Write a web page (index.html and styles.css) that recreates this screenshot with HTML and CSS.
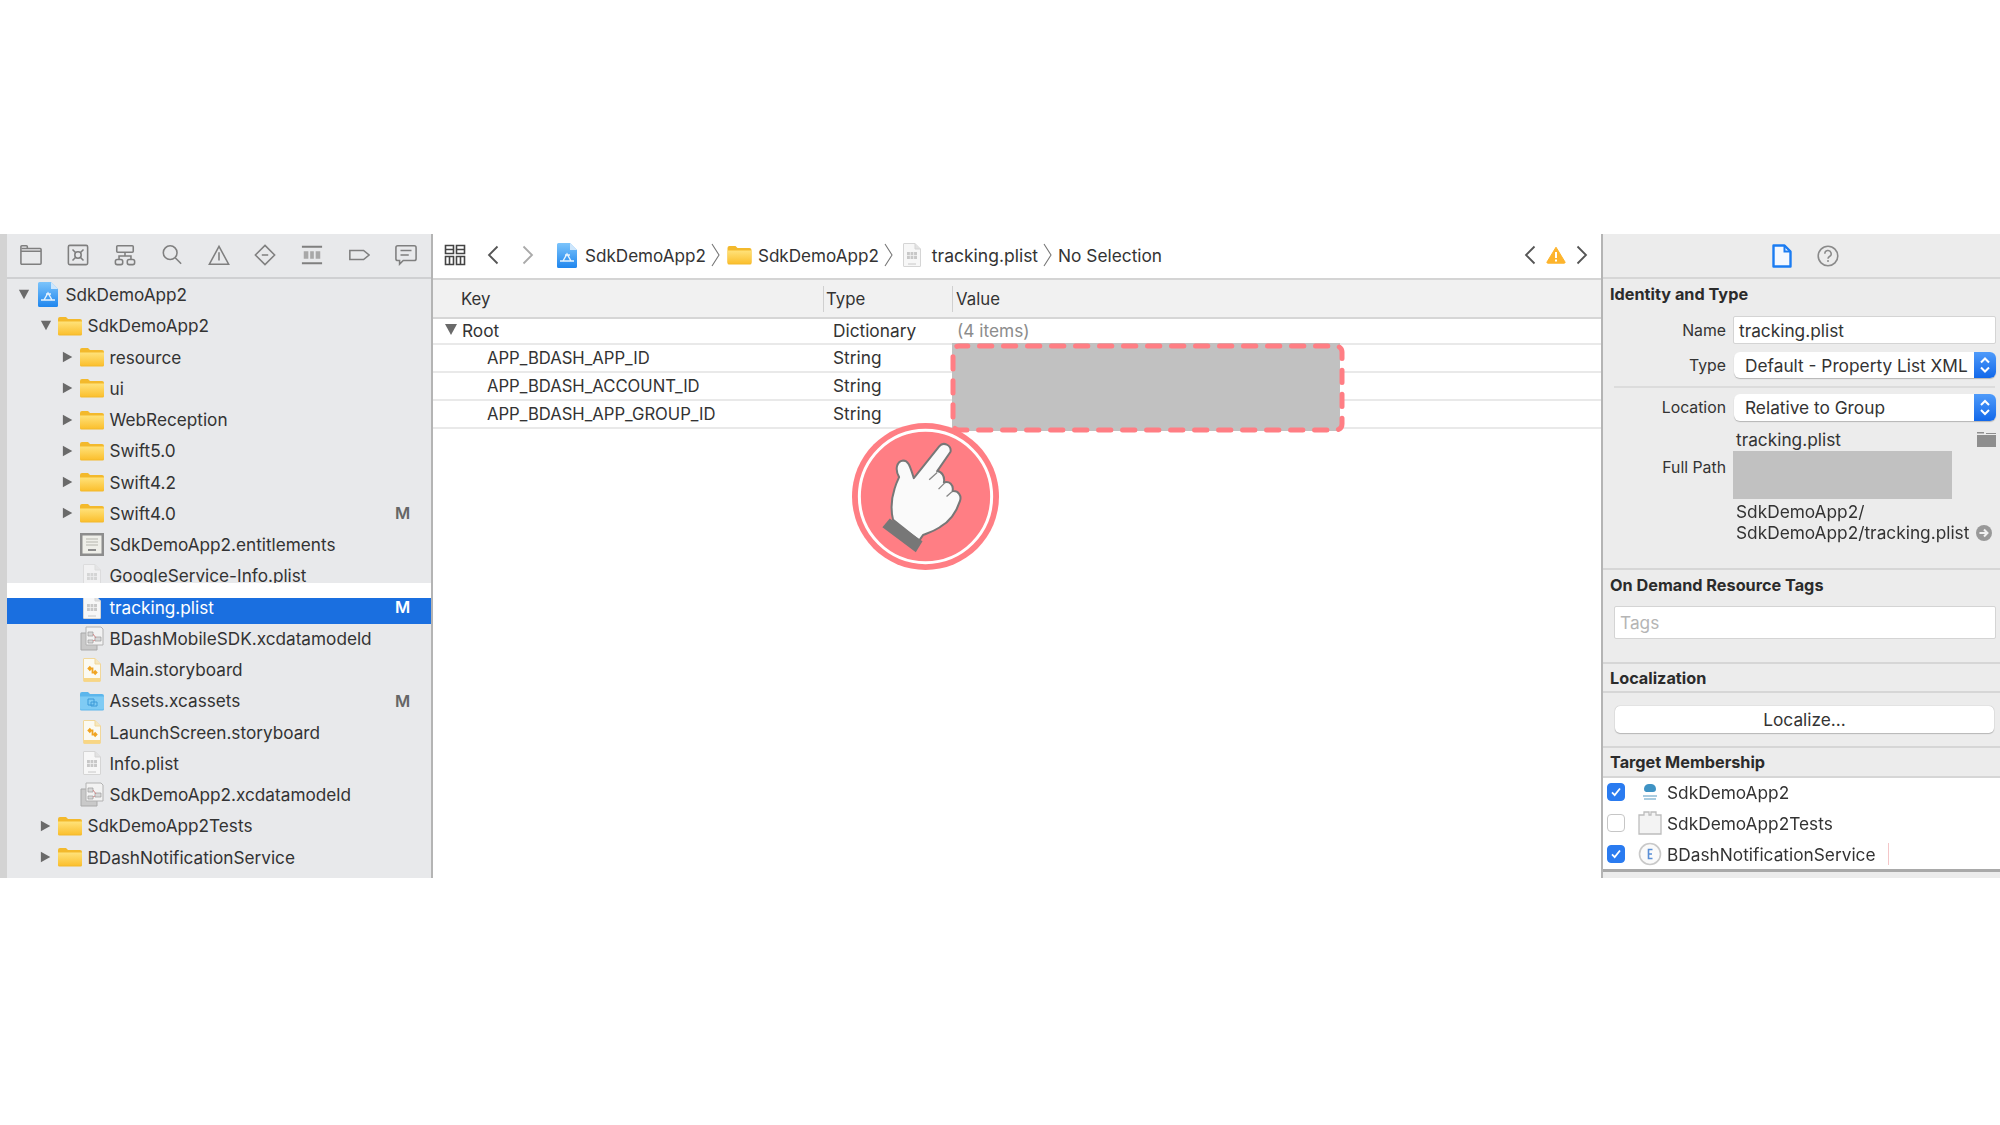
FILE: index.html
```html
<!DOCTYPE html>
<html lang="en">
<head>
<meta charset="utf-8">
<title>tracking.plist</title>
<link rel="stylesheet" href="styles.css">
</head>
<body>
<svg class="defs" width="0" height="0" aria-hidden="true">
  <defs>
    <linearGradient id="fg" x1="0" y1="0" x2="0" y2="1"><stop offset="0" stop-color="#ffe27a"/><stop offset="1" stop-color="#fbc02f"/></linearGradient>
    <linearGradient id="ag" x1="0" y1="0" x2="0" y2="1"><stop offset="0" stop-color="#7cc4fb"/><stop offset="1" stop-color="#1f86ee"/></linearGradient>
    <symbol id="folder" viewBox="0 0 24 20"><path d="M0 3a2 2 0 0 1 2-2h6l2 2h12a2 2 0 0 1 2 2v13a1.500 1.500 0 0 1-1.500 1.500h-21A1.500 1.500 0 0 1 0 18z" fill="#f3b92c"/><path d="M0 5.500h24V17a1.500 1.500 0 0 1-1.500 1.500h-21A1.500 1.500 0 0 1 0 17z" fill="url(#fg)"/></symbol>
    <symbol id="appicon" viewBox="0 0 20 25"><path d="M1.500 0H13l7 7v16.500a1.500 1.500 0 0 1-1.500 1.500h-17A1.500 1.500 0 0 1 0 23.500v-22A1.500 1.500 0 0 1 1.500 0z" fill="url(#ag)"/><path d="M13 0l7 7h-7z" fill="#cde6fc"/><path d="M3 18h14M6 18l4-7 4 7M8 12h5" fill="none" stroke="#e6f3fe" stroke-width="1.400"/></symbol>
    <symbol id="plist" viewBox="0 0 18 24"><path d="M1 .5h11l5.500 5.500v17a.5.5 0 0 1-.5.5H1a.5.5 0 0 1-.5-.5v-22A.5.5 0 0 1 1 .5z" fill="#f7f7f7" stroke="#d5d5d5"/><path d="M12 .5V6h5.500" fill="#e2e2e2" stroke="#d5d5d5"/><path d="M4 9h10v7H4z" fill="#c8c8c8"/><path d="M7.300 9v7M10.600 9v7M4 12.500h10" stroke="#f2f2f2" stroke-width=".8"/><path d="M5 21h8" stroke="#c8c8c8"/></symbol>
    <symbol id="cert" viewBox="0 0 24 25"><path d="M0 1h24v23H0z" fill="#8d8d8d"/><path d="M2.500 3.500h19v18h-19z" fill="#efefe9"/><path d="M6 7h12M6 10h12M6 13h12" stroke="#b5b5ad"/><path d="M8 18h8" stroke="#8d8d8d" stroke-width="2"/></symbol>
    <symbol id="model" viewBox="0 0 24 25"><path d="M1 7h16v17H1z" fill="#c9c9c9" stroke="#a9a9a9"/><path d="M6 1h15l2 2v16H6z" fill="#f2f2f2" stroke="#b2b2b2"/><path d="M8 6h5v4H8zM15 11h6v4h-6zM8 14h5v3H8z" fill="#d7d7d7" stroke="#9b9b9b" stroke-width=".7"/><path d="M13 8l3 4M13 15l2-1" stroke="#d28a8a"/></symbol>
    <symbol id="story" viewBox="0 0 18 24"><path d="M1 .5h11l5.500 5.500v17a.5.5 0 0 1-.5.5H1a.5.5 0 0 1-.5-.5v-22A.5.5 0 0 1 1 .5z" fill="#fbfaf2" stroke="#f1d79a"/><path d="M12 .5V6h5.500" fill="#f5e7bf" stroke="#f1d79a"/><path d="M1 20h16v3.500H1z" fill="#f8d684"/><path d="M5.500 10.500h4v4h4M11.500 12.500l2 2-2 2M7.500 8.500l-2 2 2 2" fill="none" stroke="#f0a422" stroke-width="1.800"/></symbol>
    <symbol id="assets" viewBox="0 0 24 20"><path d="M0 3a2 2 0 0 1 2-2h6l2 2h12a2 2 0 0 1 2 2v13a1.500 1.500 0 0 1-1.500 1.500h-21A1.500 1.500 0 0 1 0 18z" fill="#5cb6ec"/><path d="M0 5.500h24V17a1.500 1.500 0 0 1-1.500 1.500h-21A1.500 1.500 0 0 1 0 17z" fill="#7fcbf4"/><path d="M8 8h6v6H8zM11 11h6v4h-6z" fill="none" stroke="#3d9ad8"/></symbol>
    <symbol id="updown" viewBox="0 0 22 26"><path d="M7 10.500l4-4 4 4M7 15.500l4 4 4-4" fill="none" stroke="#fff" stroke-width="2"/></symbol>
    <symbol id="tick" viewBox="0 0 18 18"><path d="M4.500 9.500l3 3 6-7.500" fill="none" stroke="#fff" stroke-width="2"/></symbol>
    <symbol id="tri-r" viewBox="0 0 12 14"><path d="M0 1l11 6-11 6z" fill="#6a6a6a"/></symbol>
    <symbol id="tri-d" viewBox="0 0 14 12"><path d="M1 0h12L7 11z" fill="#6a6a6a"/></symbol>
  </defs>
</svg>

<main class="window">
  <aside class="nav">
    <div class="tools">
      <svg class="tool" viewBox="0 0 24 24"><path d="M2 5h20a1 1 0 0 1 1 1v15a1 1 0 0 1-1 1H2a1 1 0 0 1-1-1V3a1 1 0 0 1 1-1h5a1 1 0 0 1 1 1v2M1 8h22"/></svg>
      <svg class="tool" viewBox="0 0 24 24"><rect x="1.500" y="1.500" width="21" height="21" rx="1.500"/><circle cx="12" cy="12" r="3.500"/><path d="M6 6l3.500 3.500M18 6l-3.500 3.500M6 18l3.500-3.500M18 18l-3.500-3.500"/></svg>
      <svg class="tool" viewBox="0 0 24 24"><rect x="3" y="2" width="18" height="7" rx="1"/><rect x="1.500" y="17" width="8" height="5.500" rx="2"/><rect x="14.500" y="17" width="8" height="5.500" rx="2"/><path d="M5.500 17v-4h13v4M12 9v4"/></svg>
      <svg class="tool" viewBox="0 0 24 24"><circle cx="10" cy="9.500" r="7.500"/><path d="M15.500 15l6.500 6.500"/></svg>
      <svg class="tool" viewBox="0 0 24 24"><path d="M12 2.500l10.500 19.500h-21zM12 9v9"/></svg>
      <svg class="tool" viewBox="0 0 24 24"><path d="M12 1.500l10.500 10.500-10.500 10.500-10.500-10.500zM8.500 12h7"/></svg>
      <svg class="tool" viewBox="0 0 24 24"><path d="M1 3h22M1 21h22" stroke-width="2"/><path d="M3 8h5v8H3zM10 8h4v8h-4zM16 8h5v8h-5z" fill="#a8a8a8" stroke="none"/></svg>
      <svg class="tool" viewBox="0 0 24 24"><path d="M2 7h15l6 5-6 5H2z"/></svg>
      <svg class="tool" viewBox="0 0 24 24"><path d="M3 2h18a2 2 0 0 1 2 2v12a2 2 0 0 1-2 2H9l-4 4v-4H3a2 2 0 0 1-2-2V4a2 2 0 0 1 2-2zM6 7h12M6 12h9"/></svg>
    </div>
    <ul class="tree">
      <li class="row l0"><svg class="tri"><use href="#tri-d"/></svg><span class="ico"><svg class="i-app"><use href="#appicon"/></svg></span><span>SdkDemoApp2</span></li>
      <li class="row l1"><svg class="tri"><use href="#tri-d"/></svg><span class="ico"><svg class="i-folder"><use href="#folder"/></svg></span><span>SdkDemoApp2</span></li>
      <li class="row l2"><svg class="tri"><use href="#tri-r"/></svg><span class="ico"><svg class="i-folder"><use href="#folder"/></svg></span><span>resource</span></li>
      <li class="row l2"><svg class="tri"><use href="#tri-r"/></svg><span class="ico"><svg class="i-folder"><use href="#folder"/></svg></span><span>ui</span></li>
      <li class="row l2"><svg class="tri"><use href="#tri-r"/></svg><span class="ico"><svg class="i-folder"><use href="#folder"/></svg></span><span>WebReception</span></li>
      <li class="row l2"><svg class="tri"><use href="#tri-r"/></svg><span class="ico"><svg class="i-folder"><use href="#folder"/></svg></span><span>Swift5.0</span></li>
      <li class="row l2"><svg class="tri"><use href="#tri-r"/></svg><span class="ico"><svg class="i-folder"><use href="#folder"/></svg></span><span>Swift4.2</span></li>
      <li class="row l2"><svg class="tri"><use href="#tri-r"/></svg><span class="ico"><svg class="i-folder"><use href="#folder"/></svg></span><span>Swift4.0</span><b class="mod">M</b></li>
      <li class="row l2"><span class="tri"></span><span class="ico"><svg class="i-model"><use href="#cert"/></svg></span><span>SdkDemoApp2.entitlements</span></li>
      <li class="row l2 faded"><span class="tri"></span><span class="ico"><svg class="i-file"><use href="#plist"/></svg></span><span>GoogleService-Info.plist</span></li>
      <li class="row l2 sel"><span class="tri"></span><span class="ico"><svg class="i-file"><use href="#plist"/></svg></span><span>tracking.plist</span><b class="mod">M</b></li>
      <li class="row l2"><span class="tri"></span><span class="ico"><svg class="i-model"><use href="#model"/></svg></span><span>BDashMobileSDK.xcdatamodeld</span></li>
      <li class="row l2"><span class="tri"></span><span class="ico"><svg class="i-file"><use href="#story"/></svg></span><span>Main.storyboard</span></li>
      <li class="row l2"><span class="tri"></span><span class="ico"><svg class="i-folder"><use href="#assets"/></svg></span><span>Assets.xcassets</span><b class="mod">M</b></li>
      <li class="row l2"><span class="tri"></span><span class="ico"><svg class="i-file"><use href="#story"/></svg></span><span>LaunchScreen.storyboard</span></li>
      <li class="row l2"><span class="tri"></span><span class="ico"><svg class="i-file"><use href="#plist"/></svg></span><span>Info.plist</span></li>
      <li class="row l2"><span class="tri"></span><span class="ico"><svg class="i-model"><use href="#model"/></svg></span><span>SdkDemoApp2.xcdatamodeld</span></li>
      <li class="row l1"><svg class="tri"><use href="#tri-r"/></svg><span class="ico"><svg class="i-folder"><use href="#folder"/></svg></span><span>SdkDemoApp2Tests</span></li>
      <li class="row l1"><svg class="tri"><use href="#tri-r"/></svg><span class="ico"><svg class="i-folder"><use href="#folder"/></svg></span><span>BDashNotificationService</span></li>
    </ul>
  </aside>

  <section class="center">
    <div class="jump">
      <svg class="grid-ico" viewBox="0 0 22 22"><path d="M1.500 1.500h8v8h-8zM12.500 1.500h8v8h-8zM1.500 12.500h8v8h-8zM12.500 12.500h8v8h-8zM1.500 5.500h8M12.500 5.500h8M5.500 12.500v8M16.500 12.500v8"/></svg>
      <svg class="chev back" viewBox="0 0 12 20"><path d="M10.500 1.500L2 10l8.500 8.500"/></svg>
      <svg class="chev fwd" viewBox="0 0 12 20"><path d="M1.500 1.500L10 10l-8.500 8.500"/></svg>
      <svg class="crumb-app"><use href="#appicon"/></svg>
      <span class="crumb c1">SdkDemoApp2</span>
      <svg class="sep" viewBox="0 0 9 24"><path d="M1 1l7 11-7 11"/></svg>
      <svg class="crumb-folder"><use href="#folder"/></svg>
      <span class="crumb c2">SdkDemoApp2</span>
      <svg class="sep" viewBox="0 0 9 24"><path d="M1 1l7 11-7 11"/></svg>
      <svg class="crumb-file"><use href="#plist"/></svg>
      <span class="crumb c3">tracking.plist</span>
      <svg class="sep" viewBox="0 0 9 24"><path d="M1 1l7 11-7 11"/></svg>
      <span class="crumb c4">No Selection</span>
      <span class="spring"></span>
      <svg class="chev issue-prev" viewBox="0 0 12 20"><path d="M10.500 1.500L2 10l8.500 8.500"/></svg>
      <svg class="warn" viewBox="0 0 20 18"><path d="M10 1.200L19 16a.8.8 0 0 1-.7 1.200H1.700A.8.8 0 0 1 1 16z" fill="#fdb42c" stroke="#fdb42c" stroke-linejoin="round"/><path d="M10 6v6M10 13.500v2" stroke="#fff" stroke-width="2"/></svg>
      <svg class="chev issue-next" viewBox="0 0 12 20"><path d="M1.500 1.500L10 10l-8.500 8.500"/></svg>
    </div>

    <div class="thead">
      <span class="th k">Key</span><span class="th t">Type</span><span class="th v">Value</span>
    </div>
    <div class="tr root"><span class="k"><svg class="root-tri"><use href="#tri-d"/></svg>Root</span><span class="t">Dictionary</span><span class="v muted">(4 items)</span></div>
    <div class="tr"><span class="k child">APP_BDASH_APP_ID</span><span class="t">String</span><span class="v"></span></div>
    <div class="tr"><span class="k child">APP_BDASH_ACCOUNT_ID</span><span class="t">String</span><span class="v"></span></div>
    <div class="tr"><span class="k child">APP_BDASH_APP_GROUP_ID</span><span class="t">String</span><span class="v"></span></div>

    <svg class="redact" viewBox="0 0 397 92"><rect x="2" y="0" width="388" height="88" fill="#c1c1c1"/><rect x="3" y="3" width="389" height="84" rx="6" fill="none" stroke="#ff7e84" stroke-width="5" stroke-dasharray="12.300 11.700" stroke-linecap="round" stroke-dashoffset="-20.500"/></svg>

    <svg class="hand" viewBox="37 280 440 440">
      <circle cx="257" cy="500" r="220" fill="#ff7e84"/>
      <circle cx="257" cy="500" r="198" fill="none" stroke="#fff" stroke-width="9"/>
      <path d="M160 570C150 530 155 490 178 442C165 420 170 395 190 392C208 392 212 415 222 445L298 350C310 335 335 345 332 366L292 424C305 425 316 440 312 458C328 452 342 465 338 484C355 482 366 498 360 514C350 545 330 575 300 592C280 605 262 610 250 615L238 632z" fill="#fafafa" stroke="#777" stroke-width="6" stroke-linejoin="round"/>
      <path d="M128 592L150 566 248 634 228 667z" fill="#777"/>
      <path d="M268 450L292 428M296 478L314 460M320 500L336 486" stroke="#888" stroke-width="4" fill="none"/>
    </svg>
  </section>

  <aside class="insp">
    <div class="insp-tools">
      <svg class="doc" viewBox="0 0 20 24"><path d="M1.500 1.500h11l6 6v15h-17z" fill="#f4f8ff" stroke="#1b7cf2" stroke-width="2.400" stroke-linejoin="round"/><path d="M12.500 1.500v6h6" fill="none" stroke="#1b7cf2" stroke-width="2"/></svg>
      <svg class="help" viewBox="0 0 22 22"><circle cx="11" cy="11" r="9.800" fill="none" stroke="#8a8a8a" stroke-width="1.600"/><path d="M7.800 8.700a3.200 3.200 0 1 1 4.700 2.800c-1 .6-1.500 1-1.500 2.200M11 15v2" fill="none" stroke="#8a8a8a" stroke-width="1.500"/></svg>
    </div>

    <section class="sec sec-id">
      <h2 class="sec-title">Identity and Type</h2>
      <div class="form">
        <label class="lab">Name</label><div class="field f-name">tracking.plist</div>
        <label class="lab">Type</label><div class="pop p-type"><span>Default - Property List XML</span><i class="step"><svg><use href="#updown"/></svg></i></div>
        <hr class="rule">
        <label class="lab">Location</label><div class="pop p-loc"><span>Relative to Group</span><i class="step"><svg><use href="#updown"/></svg></i></div>
        <span></span><div class="fname"><span>tracking.plist</span><svg class="small-folder" viewBox="0 0 19 15"><path d="M0 0h7v1.500H0zM0 3h19v12H0zM9 1h10v1H9z" fill="#8e8e8e"/></svg></div>
        <label class="lab lab-path">Full Path</label><div class="path-wrap"><div class="path-mask"></div><div class="path-text">SdkDemoApp2/<br>SdkDemoApp2/tracking.plist<svg class="goto" viewBox="0 0 14 14"><circle cx="7" cy="7" r="7" fill="#999"/><path d="M3 7h7M7 4l3 3-3 3" fill="none" stroke="#f2f2f2" stroke-width="1.800"/></svg></div></div>
      </div>
    </section>

    <section class="sec sec-tags">
      <h2 class="sec-title">On Demand Resource Tags</h2>
      <div class="field f-tags">Tags</div>
    </section>

    <section class="sec sec-loc">
      <h2 class="sec-title ruled">Localization</h2>
      <div class="btn">Localize...</div>
    </section>

    <section class="target">
      <h2 class="sec-title ruled t-title">Target Membership</h2>
      <div class="tlist">
        <div class="trow"><i class="cb on"><svg><use href="#tick"/></svg></i><svg class="tico" viewBox="0 0 24 24"><path d="M6 9a5 5 0 0 1 6-5 5 5 0 0 1 6 5 3 3 0 0 1-3 3H8a3 3 0 0 1-2-3z" fill="#3f93c4"/><path d="M5 16h14M6 19h12" stroke="#8fbcd6" stroke-width="1.500"/></svg><span>SdkDemoApp2</span></div>
        <div class="trow"><i class="cb"></i><svg class="tico" viewBox="0 0 24 24"><path d="M1 23V4h5V1h5v3h2V1h5v3h5v19z" fill="#f3f3f3" stroke="#bdbdbd" stroke-width="1.300"/></svg><span>SdkDemoApp2Tests</span></div>
        <div class="trow last"><i class="cb on"><svg><use href="#tick"/></svg></i><svg class="tico" viewBox="0 0 24 24"><circle cx="12" cy="12" r="10.500" fill="#fafafa" stroke="#c9c9c9" stroke-width="1.600"/><path d="M14.500 7.500H10.500V16.500H14.500M10.500 12H14" fill="none" stroke="#5a8fd6" stroke-width="1.600"/></svg><span>BDashNotificationService</span></div>
      </div>
      <div class="tbar"></div>
    </section>
  </aside>
</main>
</body>
</html>
```

FILE: styles.css
```css
* { box-sizing: border-box; }
html, body { margin: 0; padding: 0; background: #fff; }
body {
  width: 2000px;
  height: 1125px;
  overflow: hidden;
  padding-top: 234px;
  font-family: Inter, "Liberation Sans", sans-serif;
  font-size: 17.2px;
  color: #333;
}
.defs { position: absolute; }
.window {
  display: flex;
  height: 644px;
  filter: blur(0.55px);
}

/* navigator */
.nav {
  width: 433px;
  flex: none;
  background: #e8e9eb;
  border-left: 7px solid #d3d3d3;
  border-right: 2px solid #b4b4b4;
  overflow: hidden;
  position: relative;
}
.tools {
  height: 45px;
  display: flex;
  align-items: center;
  justify-content: space-between;
  padding: 0 14px 1px 13px;
  border-bottom: 2px solid #cfd0d2;
}
.tool {
  width: 22px;
  height: 22px;
  fill: none;
  stroke: #7f7f7f;
  stroke-width: 1.700;
}
.tree { list-style: none; margin: 0; padding: 0; }
.row {
  display: flex;
  align-items: center;
  height: 31.25px;
  position: relative;
  white-space: nowrap;
}
.row > span, .row > b, .row > svg { position: relative; z-index: 1; }
.l0 { padding-left: 11px; }
.l1 { padding-left: 33px; }
.l2 { padding-left: 55px; }
.tri { width: 12px; height: 12px; flex: none; margin-right: 6px; display: block; }
.ico { width: 24px; flex: none; margin-right: 5.500px; display: flex; justify-content: center; align-items: center; }
.i-app { width: 20px; height: 25px; }
.i-folder { width: 24px; height: 20px; }
.i-file { width: 18px; height: 24px; }
.i-model { width: 24px; height: 25px; }
.mod {
  position: absolute !important;
  left: 388px;
  font-size: 16.500px;
  font-weight: 600;
  color: #666;
}
.sel { color: #fff; }
.sel .mod { color: #fff; }
.sel::before {
  content: "";
  position: absolute;
  left: 0;
  right: 0;
  top: 6.5px;
  height: 26px;
  background: #1a6fe0;
}
.sel::after {
  content: "";
  position: absolute;
  left: 0;
  right: 0;
  top: -9px;
  height: 15.5px;
  background: #fff;
  z-index: 2;
}
.faded .ico { opacity: .6; }

/* centre */
.center {
  width: 1170px;
  flex: none;
  background: #fff;
  border-right: 2px solid #b4b4b4;
  position: relative;
  font-size: 17.300px;
}
.jump {
  height: 46px;
  display: flex;
  align-items: center;
  padding: 0 13px 2px 11px;
  border-bottom: 2px solid #d4d4d4;
  background: #fff;
  font-size: 17.100px;
}
.grid-ico { width: 22px; height: 22px; fill: none; stroke: #444; stroke-width: 1.600; flex: none; }
.chev { width: 12px; height: 20px; fill: none; stroke: #555; stroke-width: 1.800; flex: none; }
.back { margin-left: 21px; }
.fwd { margin-left: 23px; stroke: #aaa; }
.crumb-app { width: 20px; height: 25px; margin-left: 23px; flex: none; }
.crumb-folder { width: 25px; height: 20px; flex: none; margin: 0 6px 0 7px; }
.crumb-file { width: 18px; height: 24px; flex: none; margin: 0 11px 0 10px; }
.crumb { white-space: nowrap; }
.c1 { margin-left: 8px; }
.c3 { font-size: 17.500px; }
.sep { width: 9px; height: 24px; flex: none; margin-left: 5px; fill: none; stroke: #777; stroke-width: 1.100; }
.c4 { margin-left: 6px; font-size: 17.300px; }
.spring { flex: 1; }
.warn { width: 20px; height: 18px; margin: 0 10px; flex: none; }

.thead, .tr {
  display: grid;
  grid-template-columns: 390px 129px 1fr;
  align-items: center;
}
.thead {
  height: 39px;
  padding: 0;
  background: #f1f1f1;
  border-bottom: 2px solid #d6d6d6;
  position: relative;
  font-size: 16.800px;
}
.th { height: 26px; display: flex; align-items: center; }
.th.k { padding-left: 28px; }
.th.t { padding-left: 2px; border-left: 1px solid #d0d0d0; }
.th.v { padding-left: 3px; border-left: 1px solid #d0d0d0; }
.tr { height: 28px; border-bottom: 2px solid #e9e9e9; line-height: 1; }
.tr.root { height: 26px; padding-bottom: 1px; }
.tr .k { padding-left: 29px; display: flex; align-items: center; }
.tr .k.child { padding-left: 54px; font-size: 16.650px; }
.tr .t { padding-left: 10px; }
.tr .v { padding-left: 5px; }
.root-tri { width: 14px; height: 12px; position: absolute; left: 11px; }
.root .k { position: relative; }
.muted { color: #8c8c8c; }
.redact {
  position: absolute;
  left: 517px;
  top: 109px;
  width: 397px;
  height: 92px;
}
.hand {
  position: absolute;
  left: 419px;
  top: 189px;
  width: 147px;
  height: 147px;
}

/* inspector */
.insp {
  flex: 1;
  background: #ececec;
  display: flex;
  flex-direction: column;
  font-size: 17.300px;
}
.insp-tools {
  height: 45px;
  flex: none;
  display: flex;
  align-items: center;
  border-bottom: 2px solid #d6d6d6;
  padding-left: 169px;
}
.doc { width: 20px; height: 24px; }
.help { width: 22px; height: 22px; margin-left: 25px; }
.sec { border-bottom: 2px solid #d6d6d6; flex: none; }
.sec-title {
  margin: 0;
  height: 30px;
  display: flex;
  align-items: center;
  padding-left: 7px;
  font-size: 16.250px;
  font-weight: 700;
  color: #2b2b2b;
}
.ruled { border-bottom: 2px solid #d6d6d6; }
.sec-id { height: 291px; }
.form {
  display: grid;
  grid-template-columns: 123px 263px;
  column-gap: 7px;
  row-gap: 8px;
  align-items: center;
  margin-top: 7px;
}
.lab { text-align: right; font-size: 15.800px; }
.field {
  height: 28px;
  background: #fff;
  border: 1px solid #d4d4d4;
  border-radius: 2px;
  display: flex;
  align-items: center;
  padding-left: 5px;
}
.pop {
  background: #fff;
  border-radius: 6px;
  box-shadow: 0 1px 1px #b5b5b5;
  display: flex;
  align-items: center;
  justify-content: space-between;
  padding-left: 11px;
  overflow: hidden;
  margin-left: 1px;
  white-space: nowrap;
}
.p-type { height: 26px; }
.p-loc { height: 27px; }
.step {
  width: 22px;
  align-self: stretch;
  background: linear-gradient(#4f9bfa, #1268ea);
  display: flex;
}
.step svg { width: 22px; height: 100%; }
.rule {
  grid-column: 1 / -1;
  border: 0;
  border-top: 2px solid #dcdcdc;
  margin: 0 1px -2px 11px;
  height: 0;
}
.fname {
  height: 22px;
  padding: 0 0 2px 3px;
  display: flex;
  justify-content: space-between;
  align-items: center;
}
.small-folder { width: 19px; height: 15px; }
.lab-path { align-self: start; margin-top: -1px; }
.path-wrap { margin-top: -8px; }
.path-mask { width: 219px; height: 48px; background: #c1c1c1; }
.path-text { padding-left: 3px; line-height: 21px; margin-top: 2px; position: relative; white-space: nowrap; }
.goto { width: 16px; height: 16px; position: absolute; left: 243px; top: 24px; }
.sec-tags { height: 94px; }
.f-tags {
  height: 33px;
  margin: 6px 4px 0 11px;
  color: #b5b5b5;
  padding: 0 0 1px 5px;
}
.sec-loc { height: 84px; }
.sec-loc .ruled { height: 29px; }
.btn {
  height: 27px;
  margin: 13px 6px 0 12px;
  background: #fff;
  border-radius: 5px;
  box-shadow: 0 0 1px #999, 0 1px 1px #bbb;
  display: flex;
  align-items: center;
  justify-content: center;
}
.target { flex: 1; display: flex; flex-direction: column; }
.t-title { height: 30px; flex: none; }
.tlist { height: 91px; background: #fff; flex: none; }
.trow {
  height: 31px;
  display: flex;
  align-items: center;
  padding-left: 4px;
  position: relative;
  top: -1.500px;
}
.cb {
  width: 18px;
  height: 18px;
  border-radius: 4px;
  background: #fff;
  border: 1px solid #c6c6c6;
  flex: none;
  display: flex;
}
.cb.on { background: #2a7bf0; border-color: #2a7bf0; }
.cb svg { width: 16px; height: 16px; }
.tico { width: 24px; height: 24px; margin: 0 5px 0 13px; flex: none; }
.last::after {
  content: "";
  position: absolute;
  left: 285px;
  top: 4px;
  height: 22px;
  border-left: 1px solid #f4c6c8;
}
.tbar { height: 3px; background: #a9a9a9; flex: none; }
```
